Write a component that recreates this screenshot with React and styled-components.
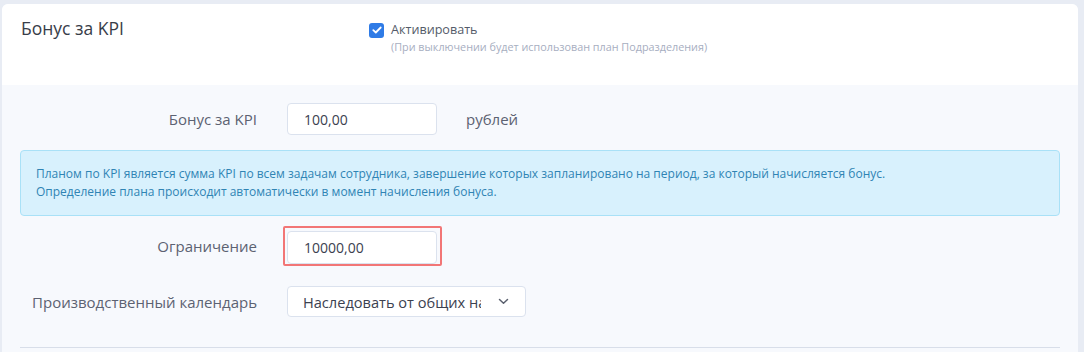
import React from "react";
import styled, { createGlobalStyle } from "styled-components";

const Global = createGlobalStyle`
  html, body { margin: 0; padding: 0; }
  body {
    background: #e8ecf4;
    font-family: "Open Sans", "Noto Sans", sans-serif;
    -webkit-font-smoothing: antialiased;
  }
`;

const Page = styled.div`
  padding: 4px 6px 0 2px;
  height: 348px;
  overflow: hidden;
`;

const Card = styled.div`
  background: #f7f9fd;
  border-radius: 6px 6px 0 0;
  overflow: hidden;
  min-height: 360px;
`;

const Header = styled.div`
  background: #ffffff;
  height: 81px;
  box-sizing: border-box;
  display: flex;
  padding: 12px 19px 0 19px;
`;

const Title = styled.h2`
  margin: 0;
  width: 348px;
  font-size: 17.5px;
  font-weight: 400;
  line-height: 24px;
  color: #383d49;
`;

const ActivateBlock = styled.div`
  display: flex;
  flex-direction: column;
  padding-top: 4px;
`;

const CheckLine = styled.label`
  display: flex;
  align-items: center;
  gap: 7px;
  font-size: 12.6px;
  line-height: 20px;
  color: #545b69;
`;

const CheckBox = styled.span`
  width: 15px;
  height: 15px;
  border-radius: 3px;
  background: #2f7be6;
  display: inline-flex;
  align-items: center;
  justify-content: center;
`;

const Hint = styled.div`
  margin-left: 22px;
  font-size: 10.8px;
  line-height: 14px;
  color: #a7aebf;
`;

const Body = styled.div`
  padding: 18px 18px 0 18px;
`;

const Row = styled.div`
  display: flex;
  align-items: center;
  margin-bottom: ${(p) => p.$mb}px;
`;

const Label = styled.div`
  width: 237px;
  text-align: right;
  padding-right: 30px;
  font-size: 15px;
  line-height: 20px;
  color: #5c6272;
  white-space: nowrap;
`;

const Input = styled.div`
  width: 150px;
  height: ${(p) => p.$h || 32}px;
  box-sizing: border-box;
  border: 1px solid #dbe2ee;
  border-radius: 4px;
  background: #fff;
  padding: 0 16px;
  display: flex;
  align-items: center;
  font-size: 14px;
  color: #3b4150;
`;

const ErrorFrame = styled.div`
  margin-left: -4px;
  border: 2px solid #f27676;
  border-radius: 2px;
  padding: 3px 3px 0 2px;
  height: 40px;
  box-sizing: border-box;
`;

const Unit = styled.div`
  margin-left: 29px;
  font-size: 15px;
  color: #5c6272;
`;

const Alert = styled.div`
  border: 1px solid #a9e1f7;
  background: #d8f1fd;
  border-radius: 4px;
  padding: 14px 15px;
  font-size: 12px;
  line-height: 18px;
  color: #2f84b4;
  margin-bottom: 10px;
`;

const Select = styled.div`
  width: 239px;
  height: 31px;
  box-sizing: border-box;
  border: 1px solid #dbe2ee;
  border-radius: 4px;
  background: #fff;
  display: flex;
  align-items: center;
  padding: 0 16px 0 15px;
  font-size: 14.6px;
  color: #3b4150;
`;

const SelectText = styled.span`
  width: 178px;
  overflow: hidden;
  white-space: nowrap;
`;

const Chevron = styled.span`
  margin-left: auto;
  display: inline-flex;
`;

const Divider = styled.div`
  height: 1px;
  background: #d8dee9;
`;

export default function App() {
  return (
    <>
      <Global />
      <Page>
        <Card>
          <Header>
            <Title>Бонус за KPI</Title>
            <ActivateBlock>
              <CheckLine>
                <CheckBox>
                  <svg width="10" height="8" viewBox="0 0 10 8">
                    <path d="M1.3 4.2 L3.8 6.5 L8.7 1.5" fill="none" stroke="#fff" strokeWidth="1.8" strokeLinecap="round" strokeLinejoin="round" />
                  </svg>
                </CheckBox>
                Активировать
              </CheckLine>
              <Hint>(При выключении будет использован план Подразделения)</Hint>
            </ActivateBlock>
          </Header>
          <Body>
            <Row $mb={15}>
              <Label>Бонус за KPI</Label>
              <Input>100,00</Input>
              <Unit>рублей</Unit>
            </Row>
            <Alert>
              Планом по KPI является сумма KPI по всем задачам сотрудника, завершение которых запланировано на период, за который начисляется бонус.
              <br />
              Определение плана происходит автоматически в момент начисления бонуса.
            </Alert>
            <Row $mb={20}>
              <Label>Ограничение</Label>
              <ErrorFrame>
                <Input $h={33}>10000,00</Input>
              </ErrorFrame>
            </Row>
            <Row $mb={30}>
              <Label>Производственный календарь</Label>
              <Select>
                <SelectText>Наследовать от общих настроек</SelectText>
                <Chevron>
                  <svg width="11" height="7" viewBox="0 0 11 7">
                    <path d="M1.5 1.5 L5.5 5.2 L9.5 1.5" fill="none" stroke="#5a606e" strokeWidth="1.5" strokeLinecap="round" strokeLinejoin="round" />
                  </svg>
                </Chevron>
              </Select>
            </Row>
            <Divider />
          </Body>
        </Card>
      </Page>
    </>
  );
}
